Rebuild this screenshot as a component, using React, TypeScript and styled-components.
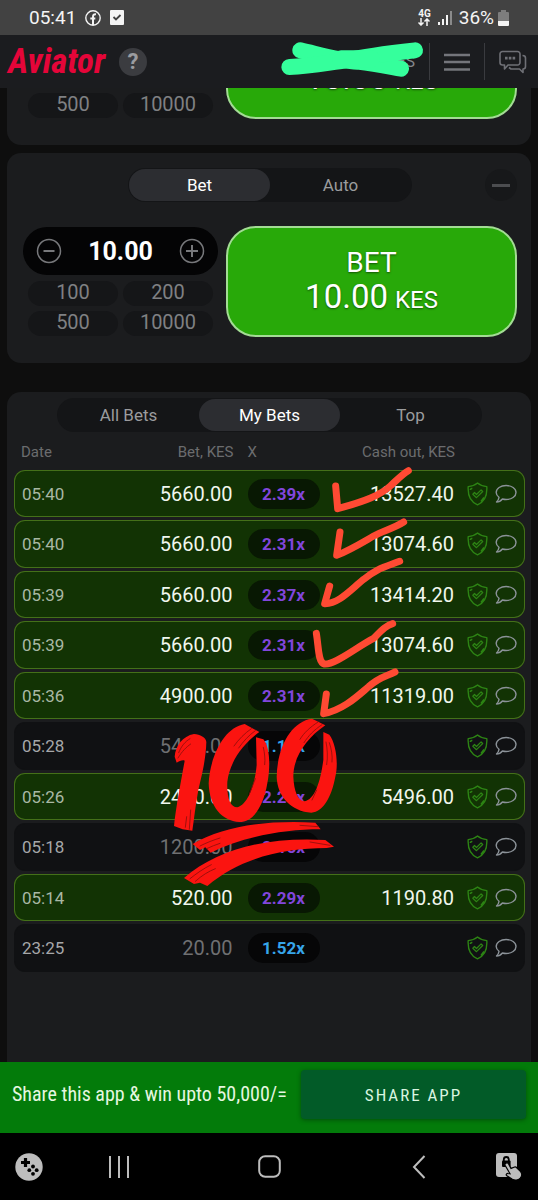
import React from "react";
import styled, { createGlobalStyle } from "styled-components";

const GlobalStyle = createGlobalStyle`
  *, *::before, *::after { box-sizing: border-box; }
  body { margin: 0; background: #0e0e0e; font-family: Roboto, "Liberation Sans", sans-serif; color: #fff; }
  button { font-family: inherit; border: 0; padding: 0; background: none; color: inherit; cursor: pointer; }
  svg { display: block; flex: none; }
`;

const Page = styled.div`
  min-height: 100vh;
  display: flex;
  flex-direction: column;
  background: #0e0e0e;
`;

/* ---------- phone status bar ---------- */

const StatusBar = styled.div`
  height: 35px;
  flex: none;
  display: flex;
  align-items: center;
  justify-content: space-between;
  padding: 0 29px;
  background: #424242;
  font-size: 19px;
  color: #f4f4f4;
`;

const StatusGroup = styled.div<{ $gap: number }>`
  display: flex;
  align-items: center;
  gap: ${(p) => p.$gap}px;
`;

const NetworkType = styled.div`
  display: flex;
  flex-direction: column;
  align-items: center;
  font-size: 10px;
  line-height: 9px;
  font-weight: 700;
`;

/* ---------- app header ---------- */

const Header = styled.header`
  height: 53px;
  flex: none;
  display: flex;
  align-items: center;
  justify-content: space-between;
  padding: 0 12px 0 8px;
  background: #1b1c1f;
`;

const Brand = styled.div`
  display: flex;
  align-items: center;
  gap: 11px;
`;

const Logo = styled.h1`
  margin: 0;
  width: 100px;
  font-family: "Roboto Condensed", "Liberation Sans Narrow", Roboto, sans-serif;
  font-size: 35px;
  line-height: 36px;
  font-weight: 700;
  font-style: italic;
  color: #e50539;
  white-space: nowrap;
`;

const HelpButton = styled.button`
  width: 28px;
  height: 28px;
  border-radius: 50%;
  background: #3b3c40;
  color: #9b9ca0;
  font-size: 22px;
  line-height: 28px;
  font-weight: 700;
`;

const HeaderActions = styled.div`
  display: flex;
  align-items: center;
`;

const Balance = styled.div`
  position: relative;
  width: 148px;
  padding-right: 14px;
  text-align: right;
  font-size: 16px;
  line-height: 37px;
  color: #84858a;
`;

const Scribble = styled.svg`
  position: absolute;
  left: 0;
  top: -2px;
`;

const IconButton = styled.button<{ $width: number }>`
  width: ${(p) => p.$width}px;
  height: 37px;
  display: flex;
  align-items: center;
  justify-content: flex-start;
  padding-left: 14px;
  border-left: 1px solid #3a3b3f;
`;

/* ---------- bet panels ---------- */

const Card = styled.section`
  margin: 0 7px;
  background: #1b1c1e;
  border-radius: 14px;
`;

const BetButton = styled.button`
  flex: 1;
  height: 111px;
  display: flex;
  flex-direction: column;
  align-items: center;
  justify-content: center;
  border: 2px solid #a3dc94;
  border-radius: 30px;
  background: #28a909;
  color: #fff;
  font-size: 28px;
  line-height: 34px;
  text-shadow: 0 1px 2px rgba(0, 0, 0, 0.5);
`;

/* panel that is mostly scrolled away under the header */
const ScrolledCard = styled(Card)`
  height: 57px;
  overflow: hidden;
  display: flex;
  align-items: flex-end;
  border-radius: 0 0 14px 14px;
  padding: 0 14px 26px 16px;
  flex: none;

  ${BetButton} { padding-top: 32px; }
`;

const BetCard = styled(Card)`
  margin-top: 8px;
  padding: 15px 14px 26px 16px;
`;

const BetCardHead = styled.div`
  display: grid;
  grid-template-columns: 1fr auto 1fr;
  align-items: center;
  margin-bottom: 24px;
`;

const Tabs = styled.div`
  display: flex;
  grid-column: 2;
  width: fit-content;
  padding: 1px;
  border-radius: 17px;
  background: #141517;
`;

const Tab = styled.button<{ $active?: boolean }>`
  width: 141px;
  height: 32px;
  border-radius: 16px;
  font-size: 17px;
  line-height: 32px;
  background: ${(p) => (p.$active ? "#2c2d31" : "transparent")};
  color: ${(p) => (p.$active ? "#ffffff" : "#9b9c9e")};
`;

const CollapseButton = styled.button`
  justify-self: end;
  width: 32px;
  height: 32px;
  border-radius: 50%;
  background: #17181a;
  display: grid;
  place-items: center;
`;

const Controls = styled.div`
  display: flex;
  align-items: flex-end;
  gap: 8px;
  width: 100%;
`;

const StakeColumn = styled.div`
  width: 195px;
  flex: none;
`;

const Stepper = styled.div`
  height: 48px;
  display: flex;
  align-items: center;
  justify-content: space-between;
  padding: 0 13px;
  margin-bottom: 6px;
  border-radius: 24px;
  background: #040405;
`;

const StakeInput = styled.input`
  width: 90px;
  border: 0;
  padding: 0;
  background: transparent;
  color: #fff;
  text-align: center;
  font-family: inherit;
  font-size: 25px;
  font-weight: 700;
`;

const QuickStakes = styled.div`
  display: grid;
  grid-template-columns: 1fr 1fr;
  gap: 5px;
  padding: 0 5px 1px;
`;

const QuickStake = styled.button`
  height: 25px;
  padding-bottom: 3px;
  border-radius: 13px;
  background: #151618;
  color: #7f8083;
  font-size: 20px;
  line-height: 22px;
`;

const BetAmount = styled.span`
  font-size: 33px;
`;

const Currency = styled.span`
  font-size: 24px;
`;

/* ---------- bets history ---------- */

const BetsCard = styled(Card)`
  position: relative;
  flex: 1;
  margin-top: 29px;
  padding: 6px 6px 64px 7px;
  border-radius: 14px 14px 0 0;

  ${Tabs} { margin: 0 auto; }
`;

const BetsTable = styled.table`
  width: 100%;
  table-layout: fixed;
  border-collapse: separate;
  border-spacing: 0 3px;
`;

const HeadCell = styled.th<{ $align?: string }>`
  height: 32px;
  padding: 2px 7px 0;
  text-align: ${(p) => p.$align ?? "left"};
  font-size: 15px;
  font-weight: 400;
  color: #6b6c6e;
`;

const Cell = styled.td<{ $align?: string }>`
  padding: 0 8px;
  text-align: ${(p) => p.$align ?? "left"};
  font-size: 20px;
  white-space: nowrap;
`;

const BetRow = styled.tr<{ $won: boolean }>`
  height: 47px;
  &:nth-child(even) { height: 48px; }

  ${Cell} {
    background: ${(p) => (p.$won ? "#123304" : "#101113")};
    border: 0 solid ${(p) => (p.$won ? "#447019" : "#101113")};
    border-width: 1px 0;
    color: ${(p) => (p.$won ? "#f1f7ee" : "#6f7072")};
  }
  ${Cell}:first-child {
    border-left-width: 1px;
    border-radius: 11px 0 0 11px;
    padding-left: 7px;
    font-size: 17px;
    color: ${(p) => (p.$won ? "#a9b8a4" : "#a6a7a9")};
  }
  ${Cell}:nth-child(3) {
    padding: 0 7px;
  }
  ${Cell}:last-child {
    border-right-width: 1px;
    border-radius: 0 11px 11px 0;
    padding: 0 6px 0 5px;
  }
`;

const Multiplier = styled.span<{ $color: string; $won: boolean }>`
  display: block;
  width: 72px;
  height: 30px;
  border-radius: 15px;
  background: ${(p) => (p.$won ? "#081803" : "#060607")};
  color: ${(p) => p.$color};
  font-size: 17px;
  line-height: 30px;
  font-weight: 700;
  text-align: center;
`;

const RowIcons = styled.div`
  display: flex;
  align-items: center;
  gap: 7px;
`;

const TickMarks = styled.svg`
  position: absolute;
  left: 310px;
  top: 68px;
  pointer-events: none;
`;

const HundredSticker = styled.svg`
  position: absolute;
  left: 143px;
  top: 318px;
  pointer-events: none;
`;

/* ---------- share bar and phone navigation ---------- */

const ShareBar = styled.div`
  height: 71px;
  flex: none;
  display: flex;
  align-items: flex-start;
  gap: 14px;
  padding: 8px 12px;
  background: #037b0a;
  font-family: "Roboto Condensed", "Liberation Sans Narrow", Roboto, sans-serif;
`;

const ShareText = styled.p`
  margin: 0;
  flex: none;
  width: 275px;
  font-size: 20px;
  line-height: 49px;
  white-space: nowrap;
  color: #e6f7e0;
`;

const ShareButton = styled.button`
  flex: 1;
  height: 49px;
  border-radius: 4px;
  background: #025b28;
  box-shadow: 0 1px 4px rgba(0, 50, 10, 0.6);
  color: #d9f5e0;
  font-size: 17px;
  letter-spacing: 2px;
`;

const NavBar = styled.nav`
  height: 67px;
  flex: none;
  display: grid;
  grid-template-columns: 30px 1fr 1fr 1fr 30px;
  align-items: center;
  justify-items: center;
  padding: 0 14px;
  background: #000;
`;

const NavButton = styled.button`
  display: grid;
  place-items: center;
  height: 40px;
`;

/* ---------- icons ---------- */

const FacebookIcon = () => (
  <svg width="16" height="16" viewBox="0 0 16 16" fill="none" stroke="#f4f4f4">
    <circle cx="8" cy="8" r="7.2" strokeWidth="1.4" />
    <path d="M8 15V7c0-2 .8-3 3-2.800M5.300 8.600h5" strokeWidth="2" />
  </svg>
);

const ClipboardIcon = () => (
  <svg width="14" height="17" viewBox="0 0 14 17">
    <path d="M1 1h12a1 1 0 0 1 1 1v13a1 1 0 0 1-1 1H1a1 1 0 0 1-1-1V2a1 1 0 0 1 1-1z" fill="#f4f4f4" />
    <path d="M3.500 8l2.500 2.500L10.500 6" fill="none" stroke="#424242" strokeWidth="1.800" />
  </svg>
);

const DataArrows = () => (
  <svg width="12" height="8" viewBox="0 0 12 8" fill="none" stroke="#f4f4f4" strokeWidth="1.500">
    <path d="M3 0v7M.5 4.500L3 7l2.500-2.500M9 8V1M6.500 3.500L9 1l2.500 2.500" />
  </svg>
);

const SignalIcon = () => (
  <svg width="14" height="15" viewBox="0 0 14 15">
    <path d="M0 12h2v3H0zM4 9h2v6H4zM8 5h2v10H8z" fill="#f4f4f4" />
    <path d="M12 1h2v14h-2z" fill="#8a8a8a" />
  </svg>
);

const BatteryIcon = () => (
  <svg width="11" height="16" viewBox="0 0 11 16">
    <path d="M3 0h5v2h2a1 1 0 0 1 1 1v8H0V3a1 1 0 0 1 1-1h2z" fill="#7d7d7d" />
    <path d="M0 11h11v4a1 1 0 0 1-1 1H1a1 1 0 0 1-1-1z" fill="#f4f4f4" />
  </svg>
);

const MenuIcon = () => (
  <svg width="26" height="18" viewBox="0 0 26 18" stroke="#74757b" strokeWidth="2.500">
    <path d="M0 2h26M0 9h26M0 16.500h26" />
  </svg>
);

const ChatIcon = () => (
  <svg width="28" height="24" viewBox="0 0 28 24" fill="none" stroke="#6f7076" strokeWidth="1.600" strokeLinejoin="round">
    <path d="M3.500 1.500h15a2.500 2.500 0 0 1 2.500 2.500v8.500a2.500 2.500 0 0 1-2.500 2.500H9l-3.500 4V15h-2A2.500 2.500 0 0 1 1 12.500V4a2.500 2.500 0 0 1 2.500-2.500z" />
    <path d="M23.500 5.500c2 0 3 .8 3 2.500v8.500c0 1.500-.8 2.500-2.500 2.500v3.500L20.500 19H12l-2-1.500" />
    <path d="M6 8.200h2.600M9.800 8.200h2.600M13.600 8.200h2.600" strokeWidth="2.800" />
  </svg>
);

const RoundSign = ({ plus = false }: { plus?: boolean }) => (
  <svg width="26" height="26" viewBox="0 0 26 26" fill="none" stroke="#77787b" strokeWidth="1.500">
    <circle cx="13" cy="13" r="11.500" />
    <path d={plus ? "M7 13h12M13 7v12" : "M7.500 13h11"} strokeWidth="2" />
  </svg>
);

const ShieldIcon = () => (
  <svg width="21" height="24" viewBox="0 0 21 24" fill="none" stroke="#2d8414" strokeLinejoin="round">
    <path d="M10.500 1C8 3.200 4.800 4.300 1.200 4.600c-.5 8 1.500 15 9.300 18.200 7.800-3.200 9.800-10.200 9.300-18.200C16.200 4.300 13 3.200 10.500 1z" strokeWidth="1.400" />
    <path d="M3.300 8c0-1 .8-1.500 2-1.800M14 19.500l3-4" strokeWidth="1.600" />
    <path d="M5.800 12.200l1.700-1.700 2 2 4.600-4.600 1.600 1.600-6.200 6.200z" strokeWidth="1.200" />
  </svg>
);

const BubbleIcon = () => (
  <svg width="22" height="20" viewBox="0 0 22 20" fill="none" stroke="#8b9298" strokeWidth="1.400" strokeLinejoin="round">
    <path d="M4 13.300C2.200 12 1.200 10.300 1.200 8.500c0-4 4.400-7 9.900-7s9.900 3 9.900 7-4.400 7-9.900 7c-1.300 0-2.600-.2-3.700-.5-1.400 1.800-3.500 3-5.900 3 1.400-1.200 2.300-2.900 2.500-4.700z" />
  </svg>
);

const GamepadIcon = () => (
  <svg width="28" height="28" viewBox="0 0 28 28">
    <circle cx="14" cy="14" r="13.700" fill="#bdbdbd" />
    <path d="M10.500 5v9M6 9.500h9" stroke="#000" strokeWidth="3.200" />
    <g fill="#000">
      <circle cx="18" cy="13.500" r="1.900" />
      <circle cx="18" cy="20.800" r="1.900" />
      <circle cx="14.300" cy="17.200" r="1.900" />
      <circle cx="21.700" cy="17.200" r="1.900" />
    </g>
  </svg>
);

const RecentsIcon = () => (
  <svg width="20" height="22" viewBox="0 0 20 22" stroke="#bdbdbd" strokeWidth="2">
    <path d="M1 0v22M10 0v22M19 0v22" />
  </svg>
);

const HomeIcon = () => (
  <svg width="23" height="23" viewBox="0 0 23 23" fill="none" stroke="#bdbdbd" strokeWidth="2">
    <rect x="1.200" y="1.200" width="20.600" height="20.600" rx="6" />
  </svg>
);

const BackIcon = () => (
  <svg width="14" height="24" viewBox="0 0 14 24" fill="none" stroke="#bdbdbd" strokeWidth="2">
    <path d="M12.500 1L2 12l10.500 11" />
  </svg>
);

const TouchLockIcon = () => (
  <svg width="28" height="28" viewBox="0 0 28 28">
    <rect x="1" y="0" width="21" height="24" rx="3" fill="#bdbdbd" />
    <path d="M8.800 8V6.500a2.500 2.500 0 0 1 5 0V8" fill="none" stroke="#000" strokeWidth="1.800" />
    <rect x="7" y="7.500" width="8.600" height="6.500" rx="1" fill="#000" />
    <path d="M10.300 10.500c1.200-1.200 2.800-.6 3.400.6l2.300 4.300 3-1.200c1.200-.5 2.300 0 3 .8l3.600 3.600c1.500 2 1.200 5-.5 6.700-2 2-5.500 2.300-7.700 1L11.500 22.500c-.8-1 .3-2.300 1.500-2l2 .3-4.800-8.300c-.4-.8-.4-1.400.1-2z" fill="#bdbdbd" stroke="#000" strokeWidth="1.200" />
  </svg>
);

/* ---------- data ---------- */

const PURPLE = "#8146dc";
const BLUE = "#36a5ea";

type Bet = { time: string; stake: string; multiplier: string; cashOut?: string };

const bets: Bet[] = [
  { time: "05:40", stake: "5660.00", multiplier: "2.39x", cashOut: "13527.40" },
  { time: "05:40", stake: "5660.00", multiplier: "2.31x", cashOut: "13074.60" },
  { time: "05:39", stake: "5660.00", multiplier: "2.37x", cashOut: "13414.20" },
  { time: "05:39", stake: "5660.00", multiplier: "2.31x", cashOut: "13074.60" },
  { time: "05:36", stake: "4900.00", multiplier: "2.31x", cashOut: "11319.00" },
  { time: "05:28", stake: "5400.00", multiplier: "1.12x" },
  { time: "05:26", stake: "2400.00", multiplier: "2.29x", cashOut: "5496.00" },
  { time: "05:18", stake: "1200.00", multiplier: "2.15x" },
  { time: "05:14", stake: "520.00", multiplier: "2.29x", cashOut: "1190.80" },
  { time: "23:25", stake: "20.00", multiplier: "1.52x" },
];

const multiplierColor = (m: string) => (parseFloat(m) < 2 ? BLUE : PURPLE);

const Amount = () => (
  <span>
    <BetAmount>10.00</BetAmount> <Currency>KES</Currency>
  </span>
);

export default function App() {
  return (
    <>
      <GlobalStyle />
      <Page>
        <StatusBar>
          <StatusGroup $gap={9}>
            <span>05:41</span>
            <FacebookIcon />
            <ClipboardIcon />
          </StatusGroup>
          <StatusGroup $gap={7}>
            <NetworkType>
              4G
              <DataArrows />
            </NetworkType>
            <SignalIcon />
            <StatusGroup $gap={4}>
              <span>36%</span>
              <BatteryIcon />
            </StatusGroup>
          </StatusGroup>
        </StatusBar>

        <Header>
          <Brand>
            <Logo>Aviator</Logo>
            <HelpButton aria-label="How to play">?</HelpButton>
          </Brand>
          <HeaderActions>
            <Balance>
              KES
              <Scribble width="144" height="36" viewBox="0 0 432 108" fill="none" stroke="#35ff9c" strokeLinecap="round" strokeLinejoin="round">
                <path d="M58 28C130 45 180 60 230 62C290 70 330 78 360 83" strokeWidth="48" />
                <path d="M25 78C90 76 140 65 195 58C260 44 330 36 402 28" strokeWidth="48" />
                <path d="M180 54h90" strokeWidth="52" />
              </Scribble>
            </Balance>
            <IconButton $width={55} aria-label="Menu">
              <MenuIcon />
            </IconButton>
            <IconButton $width={42} aria-label="Chat">
              <ChatIcon />
            </IconButton>
          </HeaderActions>
        </Header>

        <ScrolledCard>
          <Controls>
            <StakeColumn>
              <QuickStakes>
                <QuickStake>500</QuickStake>
                <QuickStake>10000</QuickStake>
              </QuickStakes>
            </StakeColumn>
            <BetButton>
              <Amount />
            </BetButton>
          </Controls>
        </ScrolledCard>

        <BetCard>
          <BetCardHead>
            <Tabs>
              <Tab $active>Bet</Tab>
              <Tab>Auto</Tab>
            </Tabs>
            <CollapseButton aria-label="Remove panel">
              <svg width="18" height="3" viewBox="0 0 18 3">
                <path d="M0 1.500h18" stroke="#4c4d50" strokeWidth="3" />
              </svg>
            </CollapseButton>
          </BetCardHead>
          <Controls>
            <StakeColumn>
              <Stepper>
                <button aria-label="Decrease bet">
                  <RoundSign />
                </button>
                <StakeInput aria-label="Bet amount" defaultValue="10.00" />
                <button aria-label="Increase bet">
                  <RoundSign plus />
                </button>
              </Stepper>
              <QuickStakes>
                <QuickStake>100</QuickStake>
                <QuickStake>200</QuickStake>
                <QuickStake>500</QuickStake>
                <QuickStake>10000</QuickStake>
              </QuickStakes>
            </StakeColumn>
            <BetButton>
              <span>BET</span>
              <Amount />
            </BetButton>
          </Controls>
        </BetCard>

        <BetsCard>
          <Tabs>
            <Tab>All Bets</Tab>
            <Tab $active>My Bets</Tab>
            <Tab>Top</Tab>
          </Tabs>
          <BetsTable>
            <colgroup>
              <col style={{ width: 91 }} />
              <col />
              <col style={{ width: 86 }} />
              <col />
              <col style={{ width: 63 }} />
            </colgroup>
            <thead>
              <tr>
                <HeadCell>Date</HeadCell>
                <HeadCell $align="right">Bet, KES</HeadCell>
                <HeadCell>X</HeadCell>
                <HeadCell $align="right">Cash out, KES</HeadCell>
                <HeadCell aria-label="Details" />
              </tr>
            </thead>
            <tbody>
              {bets.map((bet, i) => (
                <BetRow key={i} $won={!!bet.cashOut}>
                  <Cell>{bet.time}</Cell>
                  <Cell $align="right">{bet.stake}</Cell>
                  <Cell>
                    <Multiplier $won={!!bet.cashOut} $color={multiplierColor(bet.multiplier)}>
                      {bet.multiplier}
                    </Multiplier>
                  </Cell>
                  <Cell $align="right">{bet.cashOut}</Cell>
                  <Cell>
                    <RowIcons>
                      <button aria-label="Fairness">
                        <ShieldIcon />
                      </button>
                      <button aria-label="Share in chat">
                        <BubbleIcon />
                      </button>
                    </RowIcons>
                  </Cell>
                </BetRow>
              ))}
            </tbody>
          </BetsTable>

          <TickMarks width="100" height="267" viewBox="150 240 300 801" fill="none" stroke="#ff4a33" strokeWidth="21" strokeLinecap="round" strokeLinejoin="round" overflow="visible" aria-hidden="true">
            <path d="M206 318L212 386C300 362 340 345 370 318C390 300 405 283 424 272" />
            <path d="M219 456L209 526C250 510 290 485 320 468C350 452 380 445 410 426" />
            <path d="M188 618L173 671C215 672 250 630 290 598C325 568 350 562 398 544" />
            <path d="M148 760C155 800 153 848 172 852C205 855 270 800 320 775C345 750 355 738 377 731" />
            <path d="M178 942L170 1001C230 990 275 945 305 920C335 892 355 890 384 876" />
          </TickMarks>

          <HundredSticker width="220" height="190" viewBox="0 0 660 570" aria-hidden="true">
            <g fill="#fb1410">
              <path d="M74 140C76 108 98 78 132 72C150 74 168 82 169 96C168 150 152 210 145 240C136 290 132 330 127 362L98 358L72 348C78 290 92 220 104 152C98 148 88 154 80 158z" />
              <path d="M284 42L328 66C284 98 240 150 232 215C230 262 240 292 262 292C292 284 314 230 320 165L318 82L340 88C360 110 362 170 352 220C340 290 310 336 268 336C216 334 178 290 176 220C180 140 222 52 284 42z" />
              <path d="M486 26L526 46C470 84 430 140 430 200C432 245 444 270 462 274C496 270 512 210 520 150L520 66L538 74C558 100 566 160 556 200C544 262 520 304 484 308C424 304 382 260 380 200C382 110 424 34 486 26z" />
              <path d="M128 402C220 350 340 330 496 338L512 358C400 358 280 380 182 428L166 412L150 420z" />
              <path d="M102 504C200 420 340 380 526 390L552 410L530 414C400 414 270 444 172 528L150 518L132 522z" />
            </g>
            <g fill="none" stroke="#8c0f0c" strokeWidth="2.500" strokeLinecap="round">
              <path d="M86 128C94 108 106 94 120 86M84 144C96 124 108 112 122 102" />
              <path d="M110 320L106 352M122 300L118 358" />
              <path d="M304 56C284 70 266 88 252 108M316 62C296 76 280 94 266 114M340 112C344 130 346 146 344 164M298 252L316 206" />
              <path d="M504 36C480 52 462 68 450 88M516 44C492 60 476 76 462 98M538 98C544 116 548 136 546 156M528 96C532 116 534 140 530 164M486 270L500 240" />
              <path d="M150 408C170 398 190 390 210 384M170 416C184 410 196 404 210 400M450 346L504 350" />
              <path d="M120 506C140 490 160 476 184 464M136 514C156 496 176 484 196 476M480 396L540 406" />
            </g>
          </HundredSticker>
        </BetsCard>

        <ShareBar>
          <ShareText>Share this app &amp; win upto 50,000/=</ShareText>
          <ShareButton>SHARE APP</ShareButton>
        </ShareBar>

        <NavBar>
          <NavButton aria-label="Game tools">
            <GamepadIcon />
          </NavButton>
          <NavButton aria-label="Recent apps">
            <RecentsIcon />
          </NavButton>
          <NavButton aria-label="Home">
            <HomeIcon />
          </NavButton>
          <NavButton aria-label="Back">
            <BackIcon />
          </NavButton>
          <NavButton aria-label="Touch lock">
            <TouchLockIcon />
          </NavButton>
        </NavBar>
      </Page>
    </>
  );
}
